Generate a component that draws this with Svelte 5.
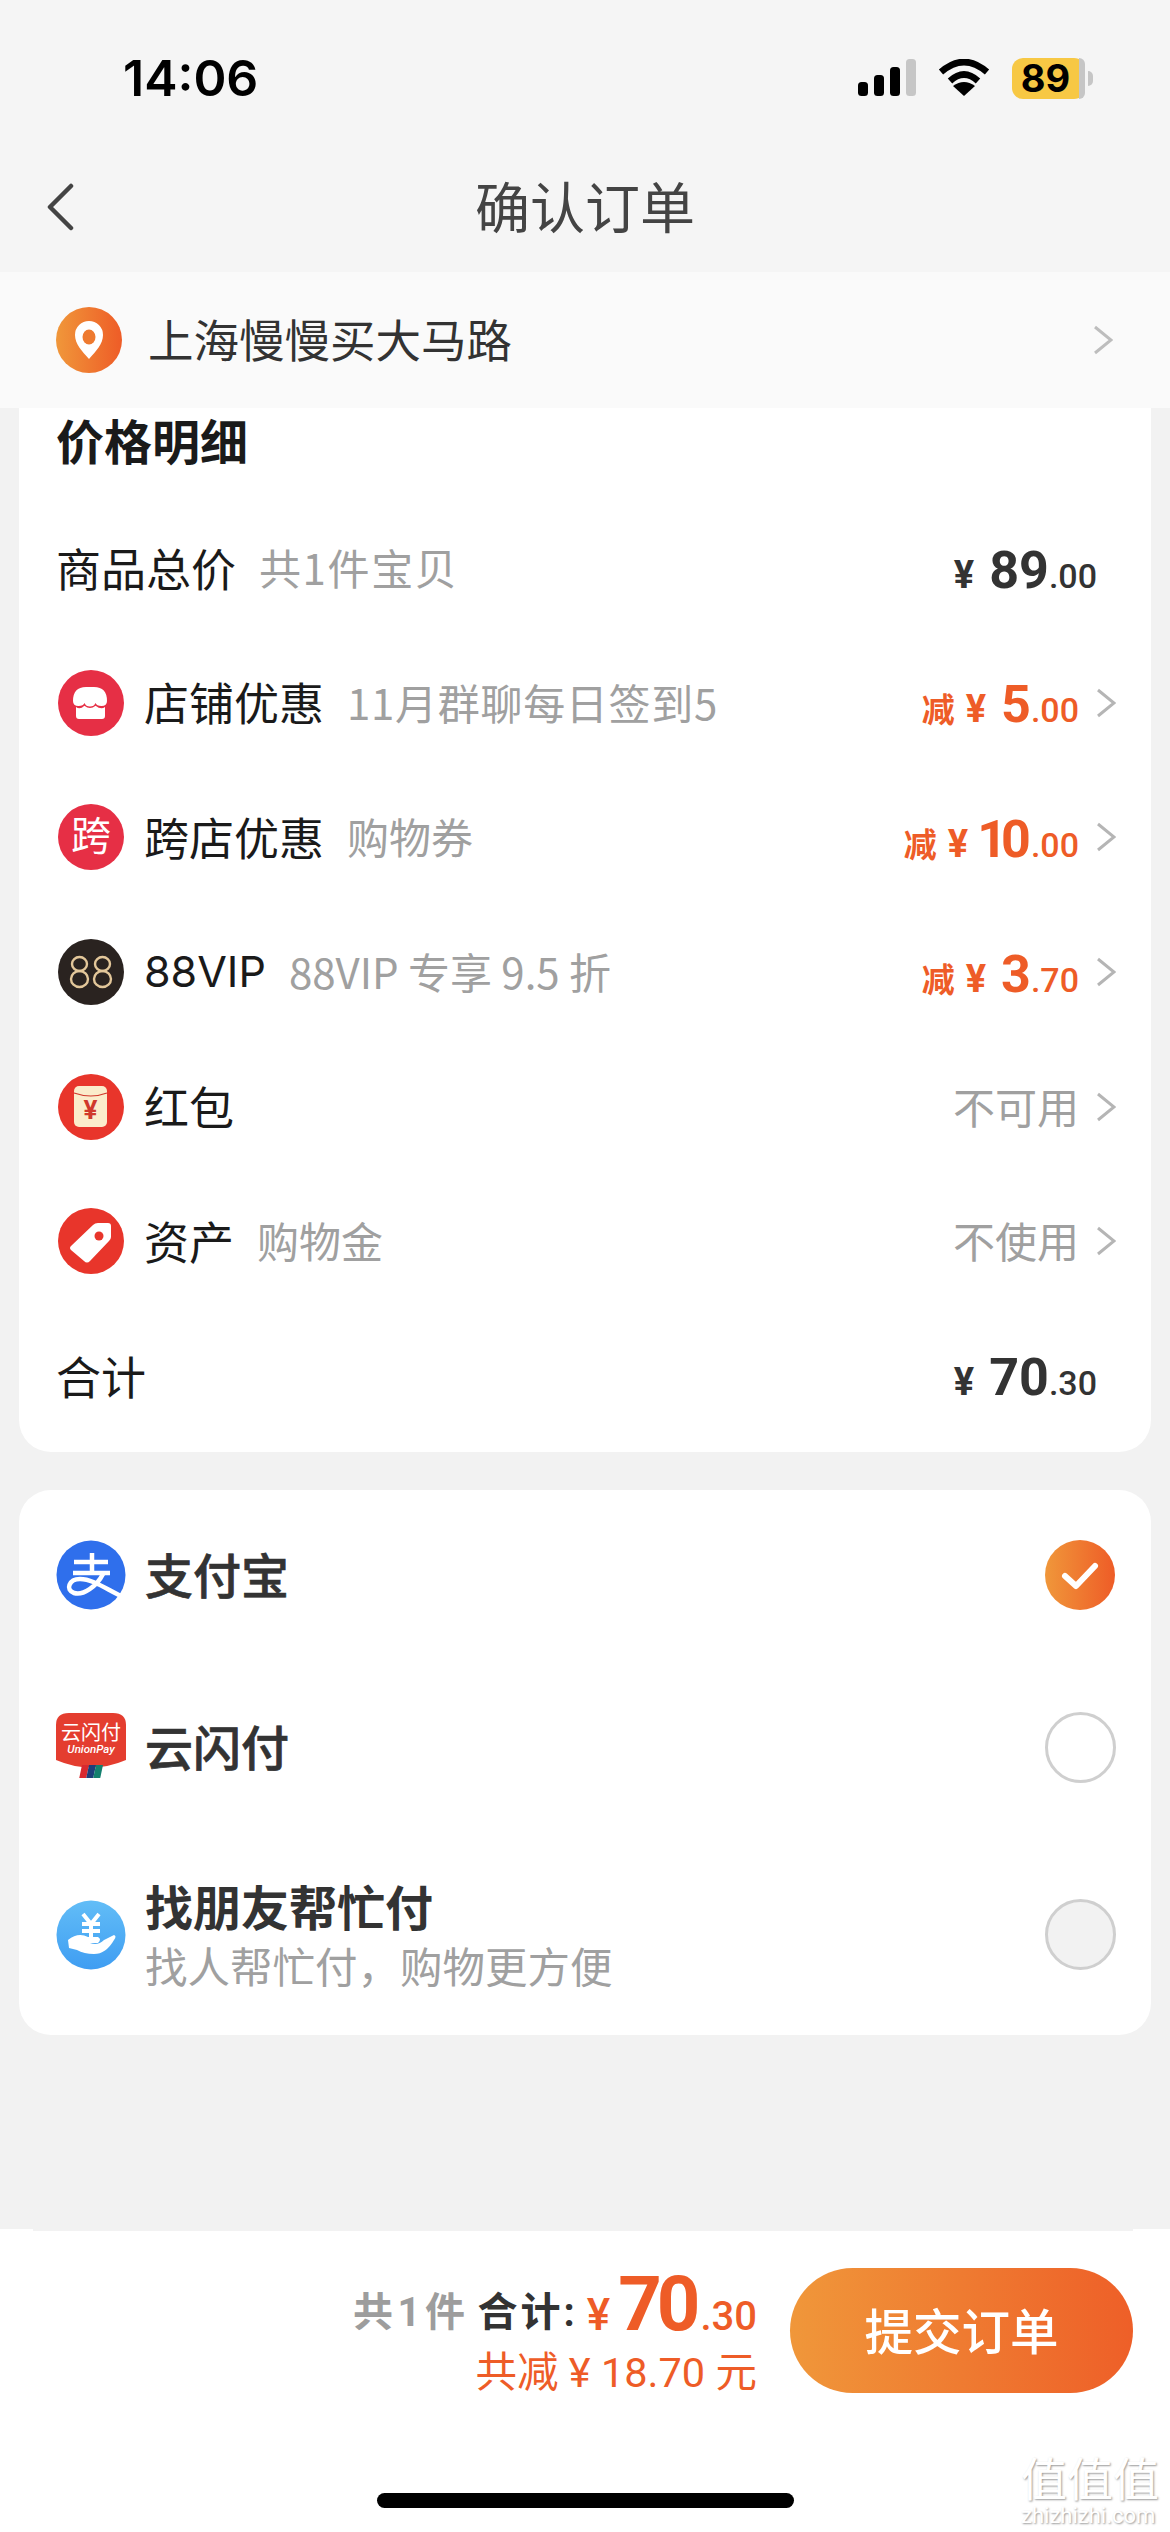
<script>
  const rows = [
    { id: 'shop', name: '店铺优惠', sub: '11月群聊每日签到5', subClass: 'sp-a', minus: '5', dec: '.00' },
    { id: 'cross', name: '跨店优惠', sub: '购物券', minus: '10', dec: '.00' },
    { id: 'vip', name: '88VIP', sub: '88VIP 专享 9.5 折', minus: '3', dec: '.70' },
    { id: 'red', name: '红包', value: '不可用' },
    { id: 'asset', name: '资产', sub: '购物金', value: '不使用' }
  ];
</script>

<div class="page">
  <header class="top">
    <div class="status">
      <span class="time">14:06</span>
      <div class="status-icons">
        <svg width="58" height="38" viewBox="0 0 58 38"><rect x="0" y="23" width="10" height="14" rx="3.5" fill="#000"/><rect x="16" y="16" width="10" height="21" rx="3.5" fill="#000"/><rect x="32" y="8" width="10" height="29" rx="3.5" fill="#000"/><rect x="48" y="0" width="10" height="37" rx="3.5" fill="#c6c6c6"/></svg>
        <svg width="52" height="38" viewBox="0 0 52 38"><path d="M3 13Q26-7 49 13" fill="none" stroke="#000" stroke-width="6.5"/><path d="M12 22Q26 9 40 22" fill="none" stroke="#000" stroke-width="6.5"/><path d="M26 37L15 27Q26 19 37 27Z" fill="#000"/></svg>
        <div class="battery"><span class="level">89</span><i class="rest"></i><i class="nub"></i></div>
      </div>
    </div>
    <nav class="nav">
      <svg class="back" width="28" height="48" viewBox="0 0 28 48"><path d="M25 3L4 24L25 45" fill="none" stroke="#444" stroke-width="4.5" stroke-linecap="round" stroke-linejoin="round"/></svg>
      <h1>确认订单</h1>
    </nav>
  </header>

  <div class="address">
    <svg width="66" height="66" viewBox="0 0 66 66"><defs><linearGradient id="orange" x1="0" x2="1"><stop offset="0" stop-color="#f0973a"/><stop offset="1" stop-color="#ee5c27"/></linearGradient></defs><circle cx="33" cy="33" r="33" fill="url(#orange)"/><path d="M33 52C26 44 19 37 19 28A14 14 0 0 1 47 28C47 37 40 44 33 52Z" fill="#fff"/><ellipse cx="33" cy="30" rx="6.5" ry="7.5" fill="#ee7a30"/></svg>
    <span class="addr-text">上海慢慢买大马路</span>
    <svg class="addr-chev" width="20" height="30" viewBox="0 0 20 30"><path d="M2 2L18 15L2 28" fill="none" stroke="#bdbdbd" stroke-width="3"/></svg>
  </div>

  <main class="main">
    <section class="card price">
      <h2>价格明细</h2>
      <div class="row">
        <span class="name flush">商品总价</span><span class="sub sp-b">共1件宝贝</span>
        <span class="amount dark plain"><span class="yen">¥</span><b>89</b><span class="dec">.00</span></span>
      </div>
      {#each rows as r}
        <div class="row">
          <svg class="ico" width="66" height="66" viewBox="0 0 66 66">
            {#if r.id === 'shop'}
              <circle cx="33" cy="33" r="33" fill="#e62f45"/>
              <path d="M15 31Q15 17 28 17H36Q49 17 49 31Q49 36 43.500 36Q38.500 36 37.600 33Q36 36.500 32 36.500Q28 36.500 26.400 33Q25.500 36 20.500 36Q15 36 15 31Z" fill="#fff"/>
              <path d="M18 37Q22 40 26.400 35.700Q32 40.500 37.600 35.700Q43 40 47 37V46Q47 49 44 49H21Q18 49 18 46Z" fill="#fff"/>
            {:else if r.id === 'cross'}
              <circle cx="33" cy="33" r="33" fill="#e62f45"/>
              <text x="33" y="46" text-anchor="middle" class="ico-t">跨</text>
            {:else if r.id === 'vip'}
              <circle cx="33" cy="33" r="33" fill="#2a2320"/>
              <g fill="none" stroke="#e3c79a" stroke-width="2.400">
                <ellipse cx="21.500" cy="25" rx="7.500" ry="7"/><ellipse cx="21.500" cy="40" rx="8.500" ry="8"/>
                <ellipse cx="44.500" cy="25" rx="7.500" ry="7"/><ellipse cx="44.500" cy="40" rx="8.500" ry="8"/>
              </g>
            {:else if r.id === 'red'}
              <circle cx="33" cy="33" r="33" fill="#e8352b"/>
              <rect x="16" y="12" width="33" height="41" rx="5" fill="#fbeccb"/>
              <path d="M16 19Q33 25 49 19" fill="none" stroke="#d0392c" stroke-width="1.200"/>
              <text x="32.500" y="45" text-anchor="middle" class="ico-y">¥</text>
            {:else}
              <circle cx="33" cy="33" r="33" fill="#e8352b"/>
              <path d="M13 38L35 17Q37 15 40 15H50Q53 15 53 18V29Q53 31 51 33L32 53Q29 56 26 53L13 42Q11 40 13 38Z" fill="#fff"/>
              <circle cx="41" cy="28" r="4.500" fill="#e8352b"/>
            {/if}
          </svg>
          <span class="name" class:latin={r.id === 'vip'}>{r.name}</span>
          {#if r.sub}<span class="sub {r.subClass ?? ''}">{r.sub}</span>{/if}
          {#if r.minus}
            <span class="amount orange"><span class="jian">减</span><span class="yen">¥</span><b class:ten={r.minus === '10'}>{r.minus}</b><span class="dec">{r.dec}</span></span>
          {:else}
            <span class="amount muted">{r.value}</span>
          {/if}
          <svg class="chev" width="20" height="30" viewBox="0 0 20 30"><path d="M2 2L18 15L2 28" fill="none" stroke="#b5b5b5" stroke-width="3"/></svg>
        </div>
      {/each}
      <div class="row">
        <span class="name flush total">合计</span>
        <span class="amount dark plain"><span class="yen">¥</span><b>70</b><span class="dec">.30</span></span>
      </div>
    </section>

    <section class="card pay">
      <div class="pay-row r1">
        <svg class="pay-ico" width="70" height="70" viewBox="0 0 70 70"><circle cx="35" cy="35" r="34.500" fill="#2f6fec"/><g fill="none" stroke="#fff" stroke-width="4.500"><path d="M18 22H52M36 13V33M17 33H54"/><path d="M47 34C41 46 27 56 18 53C9 50 13 39 24 39C37 39 50 49 67 57"/></g></svg>
        <span class="pay-name">支付宝</span>
        <svg class="radio" width="72" height="72" viewBox="0 0 72 72"><circle cx="36" cy="36" r="35" fill="url(#orange)"/><path d="M21 37L32 47L51 27" fill="none" stroke="#fff" stroke-width="6" stroke-linecap="round" stroke-linejoin="round"/></svg>
      </div>
      <div class="pay-row r2">
        <svg class="pay-ico" width="70" height="70" viewBox="0 0 70 70"><path d="M0 12Q0 0 13 0H57Q70 0 70 12V47Q35 62 0 47Z" fill="#e43d2f" transform="translate(0 1)"/><text x="35" y="28" text-anchor="middle" class="up-t">云闪付</text><text x="35" y="41" text-anchor="middle" class="up-s">UnionPay</text><g transform="translate(26 53) skewX(-12)"><rect x="0" y="0" width="7" height="13" fill="#d8292f"/><rect x="7" y="0" width="7" height="13" fill="#1d3f7a"/><rect x="14" y="0" width="7" height="13" fill="#14806e"/></g></svg>
        <span class="pay-name">云闪付</span>
        <span class="radio empty"></span>
      </div>
      <div class="pay-row r3">
        <svg class="pay-ico" width="70" height="70" viewBox="0 0 70 70"><defs><linearGradient id="blue" x1="0" y1="0" x2="0" y2="1"><stop offset="0" stop-color="#62bdf7"/><stop offset="1" stop-color="#3f9df2"/></linearGradient></defs><circle cx="35" cy="35" r="34.500" fill="url(#blue)"/><path d="M27 14L35 24L43 14M26 24H44M26 31H44M35 24V38" fill="none" stroke="#fff" stroke-width="4"/><path d="M12 44Q22 36 32 41H42Q46 43 42 47H34Q42 50 48 44L58 39Q61 40 58 44Q50 58 38 58Q28 58 21 54L13 52Z" fill="#fff" transform="translate(0 -4)"/></svg>
        <div class="pay-text">
          <span class="pay-name strong">找朋友帮忙付</span>
          <span class="pay-sub">找人帮忙付，购物更方便</span>
        </div>
        <span class="radio empty filled"></span>
      </div>
    </section>
  </main>

  <footer class="footer">
    <div class="foot-row">
      <div class="totals">
        <div class="line1"><span class="count">共1件</span><span class="sum">合计:</span><span class="fy">¥</span><b class="big">70</b><span class="fdec">.30</span></div>
        <div class="line2">共减 ¥ 18.70 元</div>
      </div>
      <button class="submit"><span>提交订单</span></button>
    </div>
    <div class="home"></div>
    <div class="mark"><span class="mark-cn">值值值</span><span class="mark-en">zhizhizhi.com</span></div>
  </footer>
</div>

<style>
  :global(body) { margin: 0; background: #f2f2f2; }
  .page {
    width: 1170px; height: 2532px; display: flex; flex-direction: column; overflow: hidden;
    font-family: "Noto Sans CJK SC", "Noto Sans", sans-serif; background: #f2f2f2; color: #111;
  }
  .top { background: #f5f5f5; height: 272px; flex: none; }
  .status { height: 140px; box-sizing: border-box; padding: 49px 85px 0 123px; display: flex; justify-content: space-between; align-items: flex-start; }
  .time { font-family: Inter, Roboto, sans-serif; font-weight: 600; font-size: 50px; line-height: 58px; color: #000; }
  .status-icons { display: flex; gap: 22px; align-items: center; height: 58px; }
  .battery { position: relative; width: 73px; height: 41px; background: #f7c844; border-radius: 11px; display: flex; }
  .level { font-family: Inter, Roboto, sans-serif; font-weight: 700; font-size: 38px; line-height: 41px; width: 67px; text-align: center; color: #000; }
  .rest { position: absolute; right: 0; top: 0; bottom: 0; width: 6px; background: #c6c6c6; border-radius: 0 11px 11px 0; }
  .nub { position: absolute; right: -8px; top: 13px; width: 5px; height: 15px; background: #c6c6c6; border-radius: 0 8px 8px 0; }
  .nav { height: 132px; position: relative; display: flex; align-items: center; justify-content: center; }
  .back { position: absolute; left: 46px; top: 43px; }
  h1 { margin: 0; font-size: 55px; font-weight: 400; line-height: 128px; height: 132px; color: #444; }

  .address { height: 136px; flex: none; background: #fafafa; display: flex; align-items: center; padding: 0 57px 0 56px; box-sizing: border-box; }
  .addr-text { font-size: 45.500px; margin-left: 26px; color: #333; line-height: 1; padding-bottom: 2px; }
  .addr-chev { margin-left: auto; flex: none; }

  .main { flex: 1; padding: 0 19px; display: flex; flex-direction: column; gap: 38px; }
  .card { background: #fff; border-radius: 32px; }
  .price { border-radius: 0 0 32px 32px; padding: 3px 35px 9px 39px; }
  h2 { margin: 0 0 0 -2px; height: 90px; font-size: 48px; font-weight: 700; line-height: 56px; color: #1a1a1a; }
  .row { height: 134.6px; display: flex; align-items: center; }
  .ico { flex: none; margin-right: 20px; }
  .ico-t { font-size: 40px; fill: #fff; }
  .ico-y { font-size: 26px; font-weight: 700; fill: #d0392c; font-family: Roboto, sans-serif; }
  .name { font-size: 45px; line-height: 1; color: #1a1a1a; padding-bottom: 2px; }
  .name.flush { margin-left: -2px; }
  .name.total { padding-bottom: 0; }
  .name.latin { font-family: Inter, sans-serif; font-size: 43px; }
  .sub { font-size: 42px; line-height: 1; color: #a0a0a0; margin-left: 23px; white-space: nowrap; padding-bottom: 2px; }
  .sp-a { letter-spacing: 0.7px; }
  .sp-b { letter-spacing: 1.6px; }
  .amount { margin-left: auto; display: flex; align-items: baseline; font-family: Roboto, "Noto Sans CJK SC", sans-serif; line-height: 1; padding-top: 5px; }
  .amount.plain { margin-right: 19px; }
  .amount b { font-size: 52px; font-weight: 700; }
  .amount b.ten { letter-spacing: -6px; margin: 0 6px 0 -6px; }
  .dec { font-size: 34px; font-weight: 500; }
  .yen { font-size: 38px; font-weight: 700; margin-right: 15px; }
  .jian { font-size: 33px; font-weight: 700; margin-right: 11px; font-family: "Noto Sans CJK SC", sans-serif; }
  .dark { color: #333; }
  .orange { color: #ee5c27; }
  .amount.muted { color: #a0a0a0; font-size: 42px; font-family: "Noto Sans CJK SC", sans-serif; padding: 0 0 2px; }
  .chev { flex: none; margin-left: 17px; }

  .pay { padding: 0 35px 0 37px; }
  .pay-row { display: flex; align-items: center; }
  .r1 { height: 170px; }
  .r2 { height: 174px; }
  .r3 { height: 201px; }
  .pay-ico { flex: none; margin-right: 19px; }
  .pay-name { font-size: 48px; font-weight: 500; line-height: 1; color: #333; -webkit-text-stroke: 0.7px #333; padding-bottom: 4px; }
  .pay-name.strong { font-weight: 700; -webkit-text-stroke: 0; padding-bottom: 0; }
  .pay-text { display: flex; flex-direction: column; gap: 12px; }
  .pay-sub { font-size: 42.500px; line-height: 48px; color: #a0a0a0; white-space: nowrap; }
  .radio { margin-left: auto; flex: none; }
  .radio.empty { width: 71px; height: 71px; box-sizing: border-box; border: 3px solid #cfcfcf; border-radius: 50%; background: #fff; }
  .radio.filled { background: #f2f2f2; }
  .up-t { font-size: 20px; fill: #fff; }
  .up-s { font-size: 11.500px; font-weight: 500; fill: #fff; font-style: italic; font-family: Roboto, sans-serif; }

  .footer { position: relative; height: 303px; flex: none; background: #fff; padding-top: 39px; box-sizing: border-box; }
  .footer::before { content: ""; position: absolute; left: 33px; right: 37px; top: 0; height: 2px; background: #f2f2f2; }
  .foot-row { height: 125px; display: flex; justify-content: flex-end; align-items: flex-start; padding-right: 37px; gap: 33px; }
  .totals { display: flex; flex-direction: column; align-items: flex-end; color: #ee5c27; }
  .line1 { display: flex; align-items: baseline; height: 72px; line-height: 72px; font-family: Roboto, "Noto Sans CJK SC", sans-serif; }
  .count { font-size: 40px; font-weight: 700; color: #9d9d9d; margin-right: 8px; letter-spacing: 4.5px; transform: translateY(-4px); }
  .sum { font-size: 40px; font-weight: 700; color: #333; margin-right: 9px; letter-spacing: 3px; transform: translateY(-4px); }
  .fy { font-size: 44px; font-weight: 500; margin-right: 8px; }
  .big { font-size: 76px; font-weight: 700; letter-spacing: -5px; }
  .fdec { font-size: 40px; font-weight: 500; margin-left: 5px; }
  .line2 { font-size: 41.500px; line-height: 50px; margin-top: 8px; font-family: Roboto, "Noto Sans CJK SC", sans-serif; white-space: nowrap; }
  .submit { width: 343px; height: 125px; border: 0; border-radius: 63px; background: linear-gradient(90deg, #f0973a, #ee5f28); color: #fff; font: 500 48.500px "Noto Sans CJK SC", sans-serif; padding: 0 0 4px; }
  .home { width: 417px; height: 15px; background: #000; border-radius: 8px; margin: 100px 0 0 377px; }
  .mark { position: absolute; left: 1021px; top: 224px; width: 149px; display: flex; flex-direction: column; color: #fff; text-shadow: 1px 1px 2px #9a9a9a; line-height: 1; white-space: nowrap; }
  .mark-cn { font-size: 46px; height: 46px; }
  .mark-en { font-size: 22px; font-family: Roboto, sans-serif; margin-top: 6px; }
</style>
